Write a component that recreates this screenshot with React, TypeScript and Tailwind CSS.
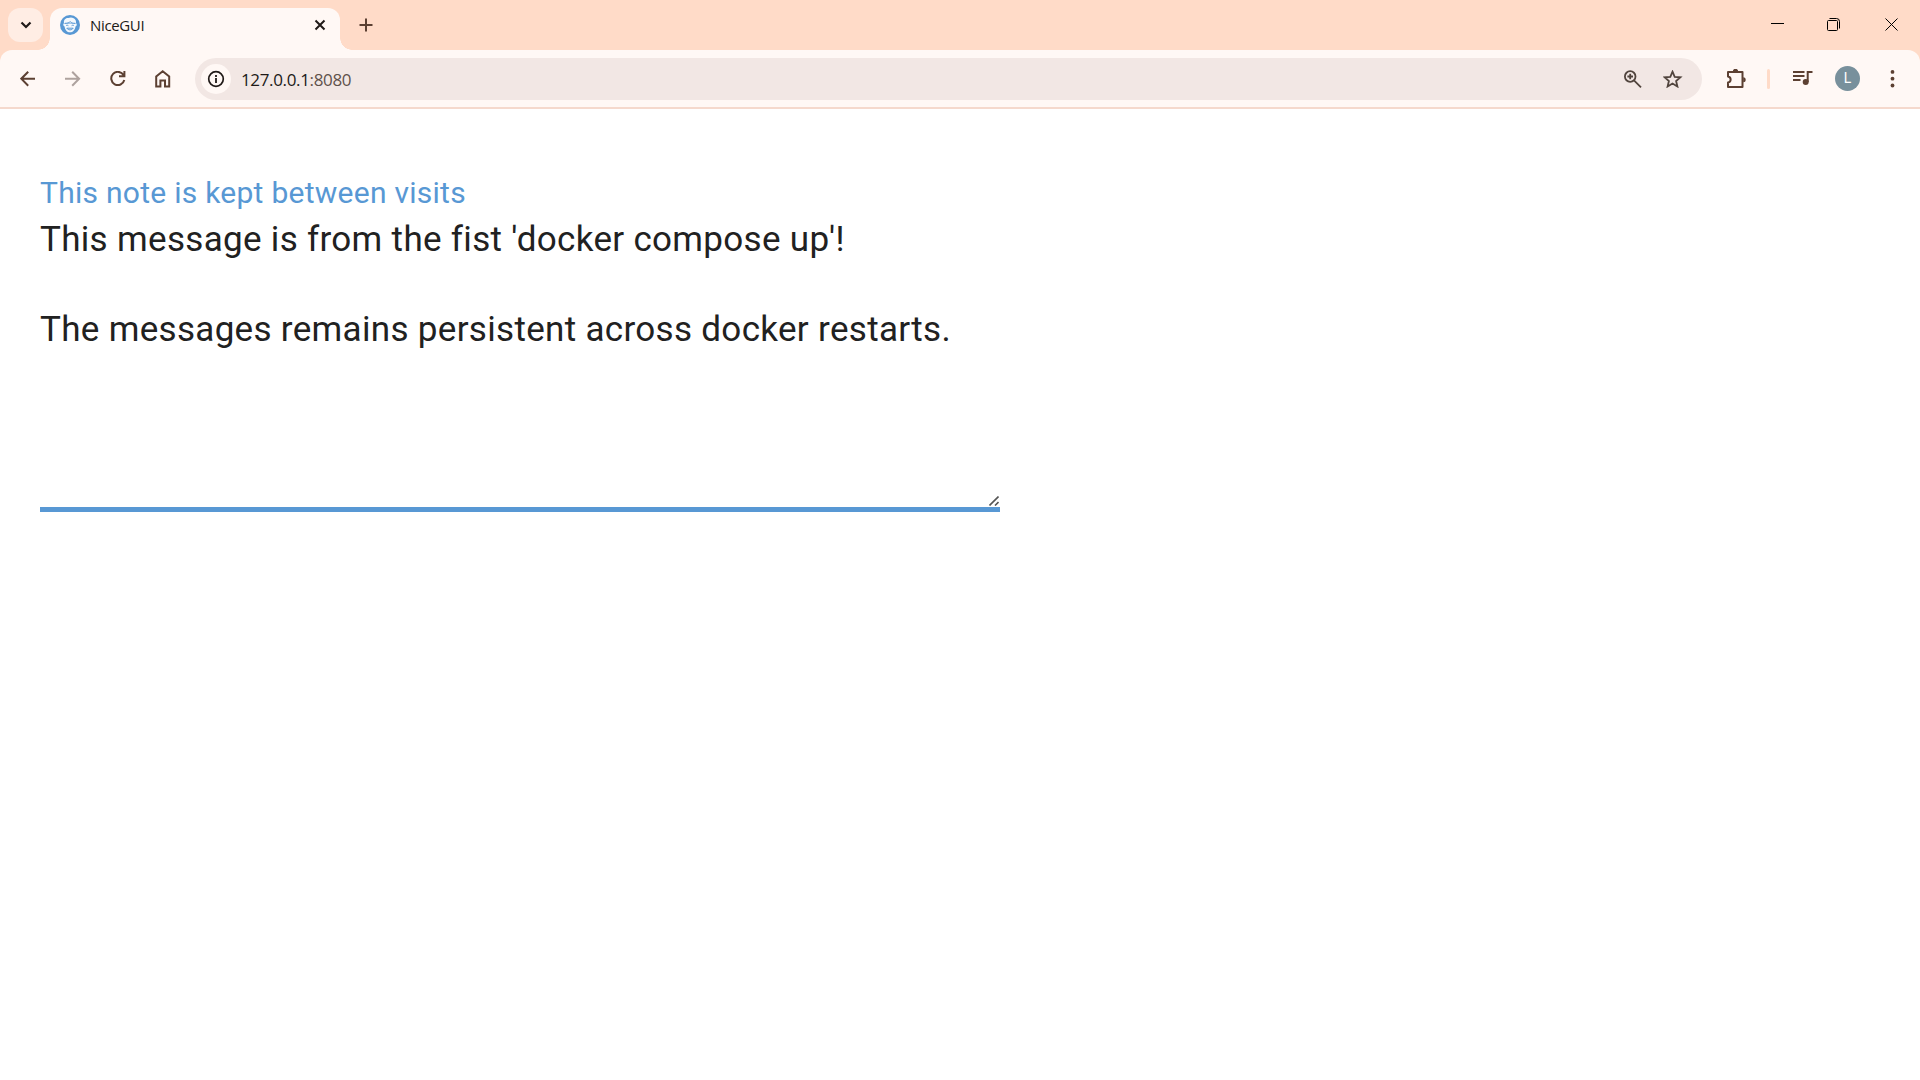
import React from "react";

function Icon({ w, h, children, className = "" }: { w: number; h: number; children: React.ReactNode; className?: string }) {
  return (
    <svg width={w} height={h} viewBox={`0 0 ${w} ${h}`} fill="none" stroke="currentColor" strokeWidth="2" className={`shrink-0 ${className}`}>
      {children}
    </svg>
  );
}

function Favicon() {
  return (
    <Icon w={20} h={20} className="ml-[10px]">
      <circle cx="10" cy="10" r="10" fill="#5898d4" stroke="none" />
      <path d="M4 8C3.400 5 5.600 2.500 8.500 3c2-1.200 6-.6 7 2 .6 1 .6 2 .4 3z" fill="#f3f8fd" stroke="none" />
      <path d="M3.500 8.500h13c.6 1.200.2 2.500-1 3C15 15 12.800 17.300 10 17.300S5 15 4.600 11.500c-1.200-.5-1.600-1.800-1.100-3z" fill="#f3f8fd" stroke="none" />
      <path d="M5 8.300c2.500 0 4-.6 5.200-1.600 1.200 1.200 2.800 1.600 4.800 1.600" stroke="#5898d4" strokeWidth="1" />
      <path d="M6 10.700c.6-.6 1.800-.6 2.400 0M11.600 10.700c.6-.6 1.800-.6 2.400 0M6.800 13.200c1.500 2.200 4.900 2.200 6.400 0z" stroke="#5898d4" strokeWidth="1" />
    </Icon>
  );
}

function TabStrip() {
  return (
    <div className="flex h-[50px] bg-[#ffdbc8]">
      <button className="mt-2 ml-2 flex h-[34px] w-[35px] items-center justify-center rounded-[12px] bg-[#ffede4] text-[#201a18]">
        <Icon w={12} h={8}><path d="M1.500 1.500 6 6l4.500-4.500" strokeWidth="2.200" /></Icon>
      </button>
      <div className="mt-[38px] ml-[-5px] h-3 w-3 bg-[radial-gradient(circle_at_0_0,transparent_11.500px,#fff8f5_12px)]" />
      <div className="mt-2 flex h-[42px] w-[290px] items-start rounded-t-[12px] bg-[#fff8f5] text-[#201a18]">
        <div className="flex h-[34px] w-full items-center">
          <Favicon />
          <span className="ml-[10px] w-[220px] font-['Open_Sans',sans-serif] text-[15px] leading-5 tracking-[-0.35px]">NiceGUI</span>
          <Icon w={12} h={12} className="ml-[4px]"><path d="m1.500 1.500 9 9m0-9-9 9" strokeWidth="2" /></Icon>
        </div>
      </div>
      <div className="mt-[38px] h-3 w-3 bg-[radial-gradient(circle_at_100%_0,transparent_11.500px,#fff8f5_12px)]" />
      <Icon w={14} h={14} className="mt-[18px] ml-[7px] text-[#5c4032]"><path d="M7 .5v13M.5 7h13" /></Icon>
      <div className="mt-[18px] mr-[22px] ml-auto flex text-black">
        <Icon w={13} h={13}><path d="M0 5.500h13" strokeWidth="1" /></Icon>
        <Icon w={13} h={13} className="ml-[43px]">
          <path d="M1.500 2.500h8a1 1 0 0 1 1 1v8a1 1 0 0 1-1 1h-8a1 1 0 0 1-1-1v-8a1 1 0 0 1 1-1zM2.500.5h7a3 3 0 0 1 3 3v7" strokeWidth="1" />
        </Icon>
        <Icon w={13} h={13} className="ml-[45px]"><path d="m.5.5 12 12m0-12-12 12" strokeWidth="1" /></Icon>
      </div>
    </div>
  );
}

function Toolbar() {
  return (
    <div className="bg-[#ffdbc8]">
      <div className="flex h-[59px] items-center rounded-t-[12px] border-b-2 border-[#f5d9cd] bg-[#fff8f5] pt-px text-[#5c4032]">
        <Icon w={16} h={16} className="ml-5"><path d="M15 7.700H1.500M8.200.7 1.300 7.700l6.900 7" /></Icon>
        <Icon w={16} h={16} className="ml-[29px] text-[#aea29e]"><path d="M0 7.700h13.500M7.200.7l6.900 7-6.900 7" /></Icon>
        <Icon w={16} h={16} className="ml-[29px]"><path d="M13.500 4A6.600 6.600 0 1 0 14.300 9M14.400 0v5.200H9" /></Icon>
        <Icon w={16} h={18} className="ml-[29px]"><path d="M1.200 16.400V6.500L7.700 1.300l6.500 5.200v9.900H10v-6H5.400v6z" /></Icon>
        <div className="ml-[24px] flex h-[42px] w-[1507px] items-center rounded-full bg-[#f2e7e4] text-[#51443d]">
          <div className="ml-[6px] flex h-[30px] w-[30px] items-center justify-center rounded-full bg-[#fff8f5] text-[#201a18]">
            <Icon w={18} h={18}><circle cx="9" cy="9" r="7.300" strokeWidth="1.700" /><path d="M9 8v5M9 5v2" strokeWidth="1.800" /></Icon>
          </div>
          <span className="mt-px ml-[10px] font-['Open_Sans',sans-serif] text-[17px] tracking-[-0.35px] text-[#201a18]">127.0.0.1<span className="text-[#5f514b]">:8080</span></span>
          <Icon w={18} h={18} className="ml-auto"><circle cx="6.200" cy="6.500" r="5.300" strokeWidth="1.800" /><path d="m10 10.300 7 7M3.400 6.500H9M6.200 3.700v5.600" strokeWidth="1.800" /></Icon>
          <Icon w={20} h={18} className="mr-[19px] ml-[21px]"><path d="m9.500 1.700 2.200 5.100 5.700.5-4.300 3.700 1.300 5.500-4.900-2.900-4.900 2.900L5.900 11 1.600 7.300l5.700-.5z" strokeWidth="1.800" /></Icon>
        </div>
        <Icon w={20} h={20} className="ml-[24px]">
          <path d="M2 3h14.500v15H2v-4.500c3.500-.5 3.500-5.500 0-6z" strokeLinejoin="round" />
          <path d="M6.800 2.500a2.700 2.700 0 0 1 5.400 0zM17.200 8.200a2.500 2.500 0 0 1 0 5z" fill="currentColor" stroke="none" />
        </Icon>
        <div className="ml-[21px] h-5 w-[3px] rounded-full bg-[#ffdbc8]" />
        <Icon w={20} h={16} className="mt-[-2px] ml-[23px]"><path d="M0 2h11.500M0 6h11.500M0 10h7.500M14.700 12V2h4.800" /><circle cx="12.700" cy="12" r="3" fill="currentColor" stroke="none" /></Icon>
        <div className="mt-[-1px] ml-[22px] flex h-[25px] w-[25px] items-center justify-center rounded-full bg-[#78909c] font-['Roboto',sans-serif] text-[14px] text-white">L</div>
        <Icon w={5} h={18} className="ml-[30px]">
          <g fill="currentColor" stroke="none">
            <circle cx="2.500" cy="1.900" r="1.900" />
            <circle cx="2.500" cy="8.700" r="1.900" />
            <circle cx="2.500" cy="15.500" r="1.900" />
          </g>
        </Icon>
      </div>
    </div>
  );
}

export default function App() {
  return (
    <div className="flex h-[1080px] w-[1920px] flex-col overflow-hidden bg-white">
      <TabStrip />
      <Toolbar />
      <main className="flex w-[1000px] flex-col pt-16 pl-10 font-['Roboto',sans-serif]">
        <label className="h-10 text-[30px] leading-10 tracking-[0.265px] whitespace-nowrap text-[#5898d4]">This note is kept between visits</label>
        <div className="mt-1 flex h-[295px] items-end justify-between border-b-[5px] border-[#5898d4]">
          <p className="h-full text-[35px] leading-[45px] tracking-[0.315px] whitespace-pre text-[#212121]">{"This message is from the fist 'docker compose up'!\n\nThe messages remains persistent across docker restarts."}</p>
          <Icon w={10} h={10} className="mr-[1px] mb-[1px] -ml-3 text-[#555]"><path d="M.5 9.500 9.500.5M6 9.500l3.500-3.500" strokeWidth="1.600" /></Icon>
        </div>
      </main>
    </div>
  );
}
